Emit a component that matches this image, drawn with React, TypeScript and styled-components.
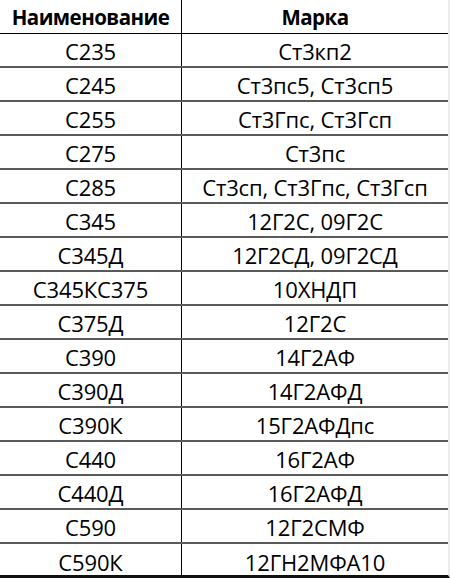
import React from "react";
import styled, { createGlobalStyle } from "styled-components";

const GlobalStyle = createGlobalStyle`
  html, body {
    margin: 0;
    padding: 0;
    background: #ffffff;
  }
  body {
    font-family: "Open Sans", "Liberation Sans", sans-serif;
  }
`;

const Table = styled.div`
  width: 450px;
  height: 578px;
  display: flex;
  flex-direction: column;
  box-sizing: border-box;
  border-right: 2px solid #ececec;
  border-bottom: 3px solid #111111;
  overflow: hidden;
`;

const Row = styled.div<{ $head?: boolean }>`
  display: grid;
  grid-template-columns: 182px 1fr;
  height: 34px;
  flex: 0 0 34px;
  box-sizing: border-box;
  border-bottom: ${(p) => (p.$head ? "1px solid #000000" : "2px solid #5a5a5a")};
  &:last-child {
    border-bottom: none;
  }
`;

const Cell = styled.div<{ $head?: boolean; $left?: boolean }>`
  display: flex;
  align-items: center;
  justify-content: center;
  font-size: ${(p) => (p.$head ? "20.5px" : "22px")};
  font-weight: ${(p) => (p.$head ? 700 : 400)};
  color: #000000;
  letter-spacing: ${(p) => (p.$head ? "-0.55px" : "-0.15px")};
  white-space: nowrap;
  border-right: ${(p) => (p.$left ? "1.5px solid #000000" : "none")};
  padding-top: 1px;
`;

const rows: [string, string][] = [
  ["С235", "Ст3кп2"],
  ["С245", "Ст3пс5, Ст3сп5"],
  ["С255", "Ст3Гпс, Ст3Гсп"],
  ["С275", "Ст3пс"],
  ["С285", "Ст3сп, Ст3Гпс, Ст3Гсп"],
  ["С345", "12Г2С, 09Г2С"],
  ["С345Д", "12Г2СД, 09Г2СД"],
  ["С345КС375", "10ХНДП"],
  ["С375Д", "12Г2С"],
  ["С390", "14Г2АФ"],
  ["С390Д", "14Г2АФД"],
  ["С390К", "15Г2АФДпс"],
  ["С440", "16Г2АФ"],
  ["С440Д", "16Г2АФД"],
  ["С590", "12Г2СМФ"],
  ["С590К", "12ГН2МФА10"],
];

export default function App() {
  return (
    <>
      <GlobalStyle />
      <Table>
        <Row $head>
          <Cell $head $left>
            Наименование
          </Cell>
          <Cell $head>Марка</Cell>
        </Row>
        {rows.map(([name, grade]) => (
          <Row key={name}>
            <Cell $left>{name}</Cell>
            <Cell>{grade}</Cell>
          </Row>
        ))}
      </Table>
    </>
  );
}
